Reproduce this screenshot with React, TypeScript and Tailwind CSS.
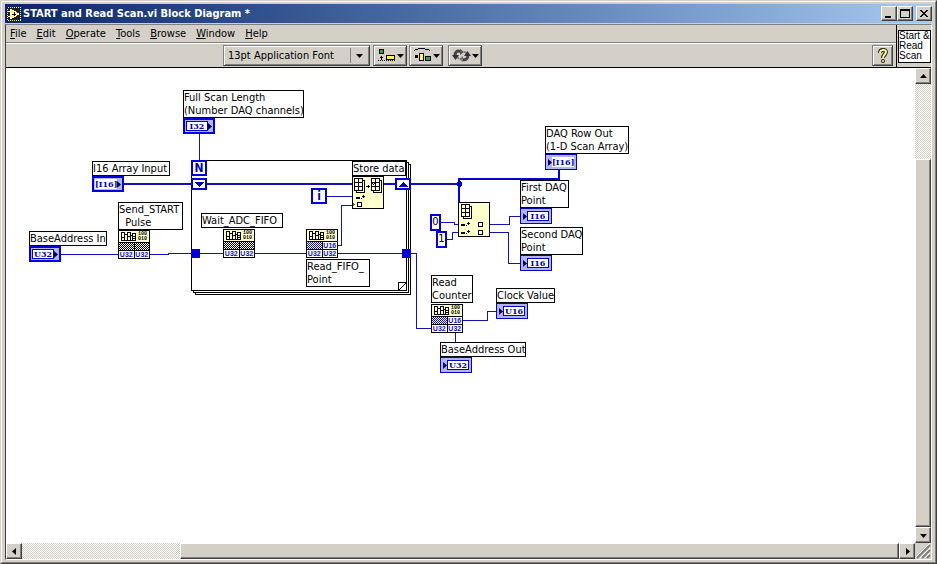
import type { ReactNode } from "react";

const RAISED =
  "bg-[#d4d0c8] border border-t-white border-l-white border-r-[#404040] border-b-[#404040] shadow-[inset_-1px_-1px_0_#808080]";
const TRACK =
  "bg-[repeating-conic-gradient(#d4d0c8_0%_25%,#ffffff_0%_50%)] bg-[length:2px_2px]";

function Arrow({ dir }: { dir: "up" | "down" | "left" | "right" }) {
  const points = {
    up: "0,5 7,5 3.5,1",
    down: "0,2 7,2 3.5,6",
    left: "5,0 5,7 1,3.5",
    right: "2,0 2,7 6,3.5",
  };
  return (
    <svg width="7" height="7" viewBox="0 0 7 7" aria-hidden="true">
      <polygon points={points[dir]} fill="#000" />
    </svg>
  );
}

function CaptionButton({ label, children }: { label: string; children: ReactNode }) {
  return (
    <button aria-label={label} className={`flex h-[15px] w-4 items-center justify-center ${RAISED}`}>
      <svg width="10" height="10" viewBox="0 0 10 10" shapeRendering="crispEdges" aria-hidden="true">
        {children}
      </svg>
    </button>
  );
}

function TitleBar() {
  return (
    <header className="flex h-[19px] items-center bg-linear-to-r from-[#0a246a] to-[#a6caf0] pl-[2px]">
      <svg width="14" height="14" viewBox="0 0 14 14" shapeRendering="crispEdges" aria-hidden="true">
        <rect width="14" height="14" fill="#222" />
        <rect x="0.5" y="0.5" width="13" height="13" fill="none" stroke="#f4efa0" strokeDasharray="1 1" />
        <path d="M3 2v10l9-5z" fill="#fff45c" stroke="#fffbd0" />
        <path d="M1 4.500h2M1 9.500h2" stroke="#fff" fill="none" />
        <path d="M5 7.500h4M7.500 5v4" stroke="#111" fill="none" />
      </svg>
      <h1 className="ml-[2px] flex-1 truncate text-[11px] leading-4 font-bold text-white">
        START and Read Scan.vi Block Diagram *
      </h1>
      <div className="flex">
        <CaptionButton label="Minimize">
          <rect x="1" y="7" width="6" height="2" />
        </CaptionButton>
        <CaptionButton label="Maximize">
          <path d="M0 0h10v9h-10zM1 2v6h8v-6z" fillRule="evenodd" />
        </CaptionButton>
      </div>
      <div className="ml-[3px]">
        <CaptionButton label="Close">
          <path d="M1 1h2v1h1v1h2v-1h1v-1h2v1h-1v1h-1v1h-1v1h1v1h1v1h1v1h-2v-1h-1v-1h-2v1h-1v1h-2v-1h1v-1h1v-1h1v-1h-1v-1h-1v-1h-1z" />
        </CaptionButton>
      </div>
    </header>
  );
}

const MENUS = ["File", "Edit", "Operate", "Tools", "Browse", "Window", "Help"];

function MenuBar() {
  return (
    <nav className="flex h-[18px] items-end gap-[10px] border-b border-[#808080] pl-1">
      {MENUS.map((name) => (
        <button key={name} className="leading-4">
          <span className="underline">{name[0]}</span>
          {name.slice(1)}
        </button>
      ))}
    </nav>
  );
}

const TOOL = "bg-[#d4d0c8] border border-[#808080] border-r-[#404040] border-b-[#404040] shadow-[inset_1px_1px_0_#fff,inset_-1px_-1px_0_#808080]";

function ToolButton({ label, children }: { label: string; children: ReactNode }) {
  return (
    <button aria-label={label} className={`flex h-[21px] w-[34px] items-center justify-center gap-px ${TOOL}`}>
      <svg width="19" height="15" viewBox="0 0 19 15" shapeRendering="crispEdges" aria-hidden="true">
        {children}
      </svg>
      <Arrow dir="down" />
    </button>
  );
}

function Toolbar() {
  return (
    <div className="flex h-6 items-center border-t border-white">
      <div className="flex flex-1 items-center pl-[217px]">
        <div className={`relative mr-[3px] h-[21px] w-[147px] ${TOOL}`}>
          <select aria-label="Font" className="h-full w-full appearance-none bg-transparent pl-1 leading-4 outline-none">
            <option>13pt Application Font</option>
          </select>
          <span className="pointer-events-none absolute inset-y-[2px] right-1 flex w-[15px] items-center justify-end border-l border-[#808080] pr-[2px]">
            <Arrow dir="down" />
          </span>
        </div>
        <div className="flex gap-[2px]">
          <ToolButton label="Align Objects">
            <rect x="2.5" y="1.5" width="4" height="4" fill="#1fae3c" stroke="#000" />
            <path d="M1 12.500h18" stroke="#000" strokeDasharray="1 1" />
            <path d="M4.500 8v4M3 9.500h3" stroke="#000" />
            <rect x="9.500" y="7.500" width="8" height="4" fill="#ffff50" stroke="#000" />
          </ToolButton>
          <ToolButton label="Distribute Objects">
            <path d="M2 1.500h3M5 0.500h7M12 1.500h4M1.500 2v1M16.500 2v1" stroke="#000" fill="none" />
            <rect x="2" y="7" width="3" height="3" fill="#000" />
            <rect x="6.500" y="5.500" width="4" height="7" fill="#ffff50" stroke="#000" />
            <rect x="12.500" y="8.500" width="5" height="4" fill="#1fae3c" stroke="#000" />
          </ToolButton>
        </div>
        <div className="ml-[5px]">
          <ToolButton label="Reorder">
            <g shapeRendering="auto" fill="none">
              <path d="M9 3.500C5 2 3 4 3 8M10 11.500c4 1 6-1 6-5" stroke="#444" strokeWidth="3" />
              <path d="M7 10c-2 0-3-1-3-2M12 4c2 0 3 1 3 3" stroke="#888" strokeWidth="2" />
              <path d="M0 7h7l-3.500 5zM12 8h7l-3.500-5z" fill="#333" />
              <path d="M8 1l4 3-4 3z" fill="#555" />
              <path d="M11 8l-4 3 4 3z" fill="#777" />
            </g>
          </ToolButton>
        </div>
      </div>
      <button aria-label="Show Context Help" className={`mr-[3px] flex h-[21px] w-[21px] items-center justify-center ${TOOL}`}>
        <svg width="12" height="16" viewBox="0 0 12 16" aria-hidden="true">
          <path d="M3 5c0-4 6-4 6-1 0 2-3 3-3 6" fill="none" stroke="#222" strokeWidth="4" />
          <circle cx="6" cy="13" r="2" fill="#222" />
          <path d="M3 5c0-4 6-4 6-1 0 2-3 3-3 6" fill="none" stroke="#ffff90" strokeWidth="2" />
          <circle cx="6" cy="13" r="1" fill="#ffff90" />
        </svg>
      </button>
    </div>
  );
}

/* Thin and thick wires, the loop frame and the tunnels, in canvas units. */
function Wires() {
  return (
    <svg className="absolute top-0 left-0" width="640" height="320" viewBox="6 68 640 320" shapeRendering="crispEdges" aria-hidden="true">
      <g fill="#fff" stroke="#000">
        <path d="M195.500 164.500h215v130h-215z" />
        <path d="M193.500 162.500h215v130h-215z" />
        <path d="M191.500 160.500h215v130h-215z" />
        <path d="M406.500 282.500h-8v8" fill="none" />
        <path d="M406.500 282.500l-8 8" />
      </g>
      <g fill="none" stroke="#1414b4">
        <path d="M199.500 134v27" />
        <path d="M61 254.500h57M150 254.500h18v-1h23M199 253.500h24M255 253.500h51M338 253.500h64M410 253.500h6v75h15" />
        <path d="M338 245.500h3.500v-40h10.500M327 196.500h25" />
        <path d="M441 222.500h13.500v2h4M447 239.500h5.500v-7h6" />
        <path d="M490 224.500h19.500v-8h11M490 232.500h18.500v31h12" />
        <path d="M463 320.500h24.500v-9h9M455.500 333v9" />
        <path d="M124 184h67M207 184h145M384 184h11M411 184h48" strokeWidth="2" />
        <path d="M459 203v-24h100v-9" strokeWidth="2" stroke="#0000d8" />
      </g>
      <g fill="#0000d8">
        <path d="M457 182h1v-1h3v1h1v4h-1v1h-3v-1h-1z" />
        <rect x="191" y="249" width="9" height="9" />
        <rect x="402" y="249" width="9" height="9" />
      </g>
      <g fill="#fff" stroke="#0000d8" strokeWidth="2">
        <rect x="192" y="179" width="14" height="10" />
        <rect x="396" y="179" width="14" height="10" />
      </g>
      <path d="M194 182h10l-5 5zM398 187h10l-5-5z" fill="#0000b0" />
    </svg>
  );
}

function Label({ at, children }: { at: string; children: ReactNode }) {
  return (
    <div className={`absolute border border-black bg-white leading-[13px] whitespace-pre ${at}`}>{children}</div>
  );
}

const TYPE_TEXT =
  "flex h-[10px] flex-1 items-center justify-center bg-white font-['DejaVu_Serif',serif] text-[8px] leading-[10px] font-bold text-[#0000b4]";

function TypeBox({ type }: { type: string }) {
  const isArray = type.startsWith("[");
  return <span className={`${TYPE_TEXT} ${isArray ? "" : "border border-[#0000c0]"}`}>{type}</span>;
}

function Triangle() {
  return (
    <svg width="4" height="7" viewBox="0 0 4 7" className="shrink-0" aria-hidden="true">
      <path d="M0 0v7l4-3.500z" fill="#000050" />
    </svg>
  );
}

function Control({ at, type }: { at: string; type: string }) {
  return (
    <div className={`absolute flex h-4 w-8 items-center border-2 border-[#0000e0] bg-[#b4b4f4] p-px ${at}`}>
      <TypeBox type={type} />
      <Triangle />
    </div>
  );
}

function Indicator({ at, type }: { at: string; type: string }) {
  return (
    <div className={`absolute flex h-4 w-8 items-center border border-[#0000c8] bg-[#b4b4f4] p-[2px] ${at}`}>
      <Triangle />
      <TypeBox type={type} />
    </div>
  );
}

function Constant({ at, children }: { at: string; children: ReactNode }) {
  return (
    <div className={`absolute flex items-center justify-center border-2 border-[#0000d8] bg-white ${at}`}>{children}</div>
  );
}

const CELL =
  "flex items-center justify-center bg-white font-['Liberation_Sans',sans-serif] text-[7px] leading-[7px] font-bold text-[#1010c0]";
const HATCH = "bg-[repeating-conic-gradient(#000000_0%_25%,#ffffff_0%_50%)] bg-[length:2px_2px]";
const BLUE_HATCH = "bg-[repeating-conic-gradient(#1010c0_0%_25%,#ffffff_0%_50%)] bg-[length:2px_2px]";

/* A FIFO access node: register icon on top, terminals below. */
function SubVi({ at, reads = false }: { at: string; reads?: boolean }) {
  return (
    <div className={`absolute flex h-[29px] w-8 flex-col gap-px border border-black bg-black ${at}`}>
      <div className="flex h-[11px] items-center gap-[2px] bg-[#ffffcc] pl-[2px]">
        <svg width="15" height="9" viewBox="0 0 15 9" shapeRendering="crispEdges" aria-hidden="true">
          <path
            d="M0.500 0.500h3v8h-3zM3.500 2.500h3v6h-3zM6.500 0.500h3v8h-3zM9.500 3.500h2v5h-2zM11.500 1.500h3v7h-3zM0 5.500h3M7 4.500h2M12 4.500h2M12 6.500h2"
            fill="none"
            stroke="#000"
          />
        </svg>
        <div className="font-['Liberation_Mono',monospace] text-[5px] leading-[5px] font-bold">
          <div>100</div>
          <div>010</div>
        </div>
      </div>
      <div className="grid h-[7px] grid-cols-2 gap-px">
        <div className={reads ? BLUE_HATCH : HATCH} />
        {reads ? <div className={CELL}>U16</div> : <div className={HATCH} />}
      </div>
      <div className="grid h-[7px] grid-cols-2 gap-px">
        <div className={CELL}>U32</div>
        <div className={CELL}>U32</div>
      </div>
    </div>
  );
}

function ArrayGrid({ x, y }: { x: number; y: number }) {
  return (
    <g transform={`translate(${x} ${y})`}>
      <path d="M2.500 2.500h8v12h-8z" fill="#fff" stroke="#000" />
      <path d="M0.500 0.500h8v12h-8zM0 4.500h9M0 8.500h9M4.500 0v13" fill="#ffffcc" stroke="#000" />
    </g>
  );
}

function ReplaceSubset({ at }: { at: string }) {
  return (
    <div className={`absolute h-[33px] w-8 border border-black bg-[#ffffcc] ${at}`}>
      <svg width="30" height="31" viewBox="0 0 30 31" shapeRendering="crispEdges" role="img" aria-label="Replace Array Subset">
        <ArrayGrid x={1} y={1} />
        <ArrayGrid x={18} y={1} />
        <path d="M19 6h1v1h-1zM21 6h1v1h-1zM20 7h1v1h-1z" />
        <path d="M13 9.500h4M15.500 8v3" stroke="#000" />
        <path d="M3 20h4v2h-4zM8 21h1v1h-1zM10 18h1v3h-1zM9 19h3v1h-3z" />
        <path d="M4.500 25.500h4v4h-4z" fill="#fff" stroke="#000" />
        <path d="M0 25v5l2-2.500z" fill="#666" />
      </svg>
    </div>
  );
}

function IndexArray({ at }: { at: string }) {
  return (
    <div className={`absolute h-[35px] w-8 border border-black bg-[#ffffcc] ${at}`}>
      <svg width="30" height="33" viewBox="0 0 30 33" shapeRendering="crispEdges" role="img" aria-label="Index Array">
        <ArrayGrid x={2} y={1} />
        <path d="M2 21h4v2h-4zM7 22h1v1h-1zM9 19h1v3h-1zM8 20h3v1h-3z" />
        <path d="M2 29h4v2h-4zM7 30h1v1h-1zM9 27h1v3h-1zM8 28h3v1h-3z" />
        <path d="M19.500 19.500h4v4h-4zM19.500 27.500h4v4h-4z" fill="#fff" stroke="#000" />
      </svg>
    </div>
  );
}

function Diagram() {
  return (
    <main className="relative min-h-[320px] min-w-0 flex-1 overflow-hidden bg-white">
      <Wires />

      <Label at="left-[177px] top-[22px] w-[121px]">{"Full Scan Length\n(Number DAQ channels)"}</Label>
      <Control at="left-[177px] top-[50px]" type="I32" />
      <Constant at="left-[185px] top-[92px] h-4 w-4">
        <span className="text-[12px] leading-3 font-bold text-[#0000b4]">N</span>
      </Constant>

      <Label at="left-[86px] top-[93px] w-[78px]">I16 Array Input</Label>
      <Control at="left-[86px] top-[108px]" type="[I16]" />

      <Label at="left-[112px] top-[134px] w-[65px]">{"Send_START\n  Pulse"}</Label>
      <SubVi at="left-[112px] top-[162px]" />

      <Label at="left-[23px] top-[163px] w-[78px]">BaseAddress In</Label>
      <Control at="left-[23px] top-[178px]" type="U32" />

      <Label at="left-[195px] top-[145px] w-[82px]">Wait_ADC_FIFO</Label>
      <SubVi at="left-[217px] top-[161px]" />

      <SubVi at="left-[300px] top-[161px]" reads />
      <Label at="left-[300px] top-[191px] w-[64px]">{"Read_FIFO_\nPoint"}</Label>

      <Constant at="left-[305px] top-[120px] h-4 w-4">
        <span className="text-[12px] leading-3 font-bold text-[#0000b4]">i</span>
      </Constant>
      <Label at="left-[346px] top-[93px] w-[54px]">Store data</Label>
      <ReplaceSubset at="left-[346px] top-[108px]" />

      <Constant at="left-[424px] top-[146px] h-[17px] w-[11px]">0</Constant>
      <Constant at="left-[430px] top-[163px] h-[17px] w-[11px]">1</Constant>
      <IndexArray at="left-[452px] top-[134px]" />

      <Label at="left-[539px] top-[58px] w-[84px]">{"DAQ Row Out\n(1-D Scan Array)"}</Label>
      <Indicator at="left-[539px] top-[86px]" type="[I16]" />
      <Label at="left-[514px] top-[112px] w-[49px]">{"First DAQ\nPoint"}</Label>
      <Indicator at="left-[514px] top-[140px]" type="I16" />
      <Label at="left-[514px] top-[159px] w-[63px]">{"Second DAQ\nPoint"}</Label>
      <Indicator at="left-[514px] top-[187px]" type="I16" />

      <Label at="left-[425px] top-[207px] w-[42px]">{"Read\nCounter"}</Label>
      <SubVi at="left-[425px] top-[236px]" reads />
      <Label at="left-[490px] top-[220px] w-[59px]">Clock Value</Label>
      <Indicator at="left-[490px] top-[235px]" type="U16" />
      <Label at="left-[434px] top-[274px] w-[86px]">BaseAddress Out</Label>
      <Indicator at="left-[434px] top-[289px]" type="U32" />
    </main>
  );
}

const SCROLL_BUTTON = `flex h-4 w-4 shrink-0 items-center justify-center ${RAISED}`;

export default function App() {
  return (
    <div className="flex min-h-screen flex-col border border-t-[#d4d0c8] border-l-[#d4d0c8] border-r-[#404040] border-b-[#404040] bg-[#d4d0c8] font-['DejaVu_Sans_Condensed','Noto_Sans',sans-serif] text-[11px] text-black">
      <div className="flex flex-1 flex-col border border-t-white border-l-white border-r-[#808080] border-b-[#808080] px-[3px] py-[2px]">
        <TitleBar />
        <div className="mt-px flex flex-1 flex-col border border-t-[#808080] border-l-[#404040] border-r-white border-b-white">
          <div className="flex border-b border-black">
            <div className="min-w-0 flex-1 border-r border-black">
              <MenuBar />
              <Toolbar />
            </div>
            <div className="flex w-[34px] items-end pb-1 pl-px">
              <div className="h-[33px] w-[33px] overflow-hidden border border-black bg-white font-['Liberation_Sans',sans-serif] text-[10px] leading-[10px] whitespace-pre">
                {"Start &\nRead\nScan"}
              </div>
            </div>
          </div>
          <div className="flex flex-1">
            <Diagram />
            <div className={`flex w-4 flex-col ${TRACK}`}>
              <button aria-label="Scroll up" className={SCROLL_BUTTON}>
                <Arrow dir="up" />
              </button>
              <div className="flex flex-1 flex-col justify-end">
                <div className={`h-[83%] ${RAISED}`} />
              </div>
              <button aria-label="Scroll down" className={SCROLL_BUTTON}>
                <Arrow dir="down" />
              </button>
            </div>
          </div>
          <div className="flex h-4">
            <div className={`flex min-w-0 flex-1 ${TRACK}`}>
              <button aria-label="Scroll left" className={SCROLL_BUTTON}>
                <Arrow dir="left" />
              </button>
              <div className="flex flex-1 justify-end">
                <div className={`w-[82%] ${RAISED}`} />
              </div>
              <button aria-label="Scroll right" className={SCROLL_BUTTON}>
                <Arrow dir="right" />
              </button>
            </div>
            <svg width="16" height="16" viewBox="0 0 16 16" aria-hidden="true">
              <path d="M2 15L15 2M7 15l8-8M12 15l3-3" stroke="#808080" strokeWidth="2" />
              <path d="M0 15L15 0M5 15L15 5M10 15l5-5" stroke="#fff" />
            </svg>
          </div>
        </div>
      </div>
    </div>
  );
}
